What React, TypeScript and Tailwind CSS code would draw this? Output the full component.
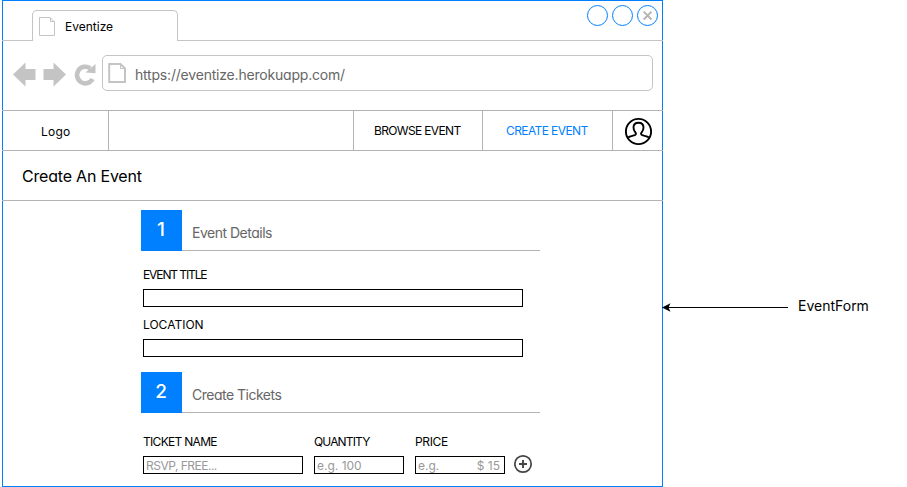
import React from "react";

function PageIcon({ className, bold }: { className: string; bold?: boolean }) {
  return (
    <svg className={className} viewBox="0 0 18 20" fill="none" stroke="#c4c4c4" strokeWidth={bold ? 2 : 1}>
      {bold ? (
        <>
          <path d="M1.2 1H12.5L17 5.5V19H1.2Z" />
          <path d="M12.5 1V5.5H17" strokeWidth="1" />
        </>
      ) : (
        <>
          <path d="M1.5 1.5H12L16.5 6V19.5H1.5Z" />
          <path d="M12.5 1.5V5.5H16.5" />
        </>
      )}
    </svg>
  );
}

function WindowButton({ close }: { close?: boolean }) {
  return (
    <svg className="h-[21px] w-[21px]" viewBox="0 0 21 21" fill="none" stroke="#0080ff">
      <circle cx="10.5" cy="10.5" r="10" />
      {close && <path d="M6.700 6.700L14.500 14.500M14.500 6.700L6.700 14.500" stroke="#b3b3b3" strokeWidth="1.800" />}
    </svg>
  );
}

function TabBar() {
  return (
    <div className="-mx-px flex h-10 items-stretch">
      <div className="w-[30px] border-b border-[#c4c4c4]" />
      <div className="mt-[9px] flex w-[146px] rounded-t-[5px] border border-b-0 border-[#c4c4c4] pl-[5px]">
        <PageIcon className="mt-[5px] h-5 w-[18px]" />
        <span className="ml-[9px] mt-[7px] text-[12px] leading-[18px] tracking-[0px]">Eventize</span>
      </div>
      <div className="flex flex-1 justify-end gap-1 border-b border-[#c4c4c4] pr-[5px] pt-1">
        <WindowButton />
        <WindowButton />
        <WindowButton close />
      </div>
    </div>
  );
}

function AddressBar() {
  return (
    <div className="flex h-[69px] pl-[10px] pt-[14px]">
      <svg className="h-9 w-[84px]" viewBox="0 0 84 36">
        <path d="M0 19.500L12.500 7.500V14H22.500V25H12.500V31.500Z" fill="#c4c4c4" />
        <path d="M53 19.500L40.500 7.500V14H30.500V25H40.500V31.500Z" fill="#c4c4c4" />
        <path d="M77.200 13.300A8.300 8.300 0 1 0 79.600 24" fill="none" stroke="#c4c4c4" strokeWidth="4.600" />
        <path d="M72.500 17.500L82.500 9V18.300Z" fill="#c4c4c4" />
      </svg>
      <div className="ml-[5px] flex h-9 w-[551px] rounded-[5px] border border-[#c4c4c4] pl-[5px]">
        <PageIcon bold className="mt-[7px] h-5 w-[18px]" />
        <span className="ml-[9px] mt-[10px] whitespace-nowrap text-[14px] leading-[18px] tracking-[-0.2px] text-[#666]">
          https://eventize.herokuapp.com/
        </span>
      </div>
    </div>
  );
}

function NavBar() {
  return (
    <nav className="-mx-px flex h-[41px] border-y border-[#b3b3b3] text-[12px] leading-[39px]">
      <div className="w-[107px] border-r border-[#b3b3b3] pl-[39px] pt-px tracking-[0.2px]">Logo</div>
      <div className="w-[245px] border-r border-[#b3b3b3]" />
      <div className="w-[129px] whitespace-nowrap border-r border-[#b3b3b3] pl-[20px]">
        <span className="tracking-[-0.65px]">BROWSE EVENT</span>
      </div>
      <div className="w-[130px] whitespace-nowrap border-r border-[#b3b3b3] pl-[23px] text-[#0080ff]">
        <span className="tracking-[-0.6px]">CREATE EVENT</span>
      </div>
      <div className="pl-[12px] pt-[6px]">
        <svg className="h-[29px] w-[28px]" viewBox="0 0 28 29" fill="none" stroke="#000" strokeWidth="1.900">
          <circle cx="13.500" cy="14.500" r="12.600" />
          <path d="M3 20.500C5 19 7.500 19 9.800 18.200C11.500 17.500 11.100 16.300 10.200 15.100C8.800 13.300 8.500 12.500 8.500 10.500C8.500 7.500 10.500 5.700 13.500 5.700S18.500 7.500 18.500 10.500C18.500 12.500 18.200 13.300 16.800 15.100C15.900 16.300 15.500 17.500 17.200 18.200C19.500 19 22 19 24 20.500" />
        </svg>
      </div>
    </nav>
  );
}

function SectionHeader({ step, title }: { step: string; title: string }) {
  return (
    <div className="flex h-[41px] w-[399px]">
      <div className="w-[41px] bg-[#0080ff] pr-px text-center text-[19px] font-medium leading-[40px] text-white">
        {step}
      </div>
      <div className="flex-1 border-b border-[#b3b3b3] pl-[10px] pt-[14px] text-[14px] leading-[18px] tracking-[-0.5px] text-[#666]">
        {title}
      </div>
    </div>
  );
}

interface FieldProps {
  label: string;
  children?: React.ReactNode;
  className: string;
  tracking: string;
}

function Field({ label, children, className, tracking }: FieldProps) {
  return (
    <div className={className}>
      <div className={`h-[23px] whitespace-nowrap pt-px text-[12px] leading-4 ${tracking}`}>{label}</div>
      <div className="flex h-[18px] justify-between whitespace-nowrap border border-black px-[2px] pt-px text-[12px] leading-4 text-[#999]">
        {children}
      </div>
    </div>
  );
}

export default function App() {
  return (
    <div className="flex h-[487px] w-[907px] overflow-hidden bg-white pl-[2px] font-['Inter','Liberation_Sans',sans-serif] text-black [font-feature-settings:'cv11']">
      <main className="h-[487px] w-[661px] shrink-0 border border-[#0080ff]">
        <TabBar />
        <AddressBar />
        <NavBar />
        <h1 className="-mx-px h-[50px] border-b border-[#b3b3b3] pl-[20px] text-[16px] leading-[51px] tracking-[-0.2px]">
          Create An Event
        </h1>
        <div className="pl-[138px] pt-[9px]">
          <SectionHeader step="1" title="Event Details" />
          <div className="flex flex-col gap-[9px] pb-[15px] pl-[2px] pt-[15px]">
            <Field label="EVENT TITLE" className="w-[380px]" tracking="tracking-[-1.1px]" />
            <Field label="LOCATION" className="w-[380px]" tracking="tracking-[0px]" />
          </div>
          <SectionHeader step="2" title="Create Tickets" />
          <div className="flex pl-[2px] pt-[20px]">
            <Field label="TICKET NAME" className="w-[160px]" tracking="tracking-[-0.7px]">
              <span className="tracking-[-0.500px]">RSVP, FREE...</span>
            </Field>
            <Field label="QUANTITY" className="ml-[11px] w-[90px]" tracking="tracking-[-0.85px]">
              <span>e.g. 100</span>
            </Field>
            <Field label="PRICE" className="ml-[11px] w-[90px]" tracking="tracking-[-0.35px]">
              <span>e.g.</span>
              <span className="pr-[2px]">$ 15</span>
            </Field>
            <svg className="ml-[8px] mt-[21px] h-5 w-5" viewBox="0 0 20 20" fill="none" stroke="#444">
              <circle cx="10" cy="10" r="8.200" strokeWidth="1.700" />
              <path d="M6 10H14M10 6V14" strokeWidth="1.900" />
            </svg>
          </div>
        </div>
      </main>
      <aside className="flex pt-[296px]">
        <svg className="-ml-px mt-[5px] h-3 w-[127px]" viewBox="0 0 127 12">
          <path d="M5 6.500H126" stroke="#000" />
          <path d="M0 6.500L8.500 2.200L6.500 6.500L8.500 10.800Z" fill="#000" />
        </svg>
        <span className="ml-[9px] text-[14px] leading-5">EventForm</span>
      </aside>
    </div>
  );
}
